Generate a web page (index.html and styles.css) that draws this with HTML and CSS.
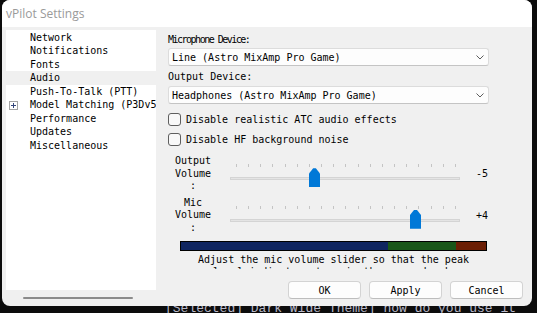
FILE: index.html
```html
<!DOCTYPE html>
<html>
<head>
<meta charset="utf-8">
<title>vPilot Settings</title>
<link rel="stylesheet" href="styles.css">
</head>
<body>
<div class="window">
  <div class="titlebar">vPilot Settings</div>
  <div class="body">
    <div class="side">
      <div class="tree">
        <div class="node"><span class="indent"></span>Network</div>
        <div class="node"><span class="indent"></span>Notifications</div>
        <div class="node"><span class="indent"></span>Fonts</div>
        <div class="node selected"><span class="indent"></span>Audio</div>
        <div class="node"><span class="indent"></span>Push-To-Talk (PTT)</div>
        <div class="node"><span class="indent"><svg class="expander" width="9" height="9" viewBox="0 0 9 9"><rect x="0.5" y="0.5" width="8" height="8" fill="#fff" stroke="#a3a3a3"/><path d="M2 4.5h5M4.5 2v5" stroke="#33457a" stroke-width="1"/></svg></span>Model Matching (P3Dv5)</div>
        <div class="node"><span class="indent"></span>Performance</div>
        <div class="node"><span class="indent"></span>Updates</div>
        <div class="node"><span class="indent"></span>Miscellaneous</div>
      </div>
      <div class="hscroll"><div class="hthumb"></div></div>
    </div>
    <div class="main">
      <div class="content">
        <div class="label first condensed">Microphone Device:</div>
        <div class="combo">
          <span>Line (Astro MixAmp Pro Game)</span>
          <svg width="8" height="5" viewBox="0 0 8 5"><path d="M0.5 0.5L4 4L7.5 0.5" fill="none" stroke="#5d5d5d" stroke-width="1"/></svg>
        </div>
        <div class="label second">Output Device:</div>
        <div class="combo combo2">
          <span>Headphones (Astro MixAmp Pro Game)</span>
          <svg width="8" height="5" viewBox="0 0 8 5"><path d="M0.5 0.5L4 4L7.5 0.5" fill="none" stroke="#5d5d5d" stroke-width="1"/></svg>
        </div>
        <div class="check check1"><span class="box"></span>Disable realistic ATC audio effects</div>
        <div class="check check2"><span class="box"></span>Disable HF background noise</div>
        <div class="vol vol1">
          <div class="vol-label">Output Volume :</div>
          <div class="slider">
            <div class="ticks"><i></i><i></i><i></i><i></i><i></i><i></i><i></i><i></i><i></i><i></i><i></i><i></i><i></i><i></i><i></i><i></i><i></i><i></i><i></i></div>
            <div class="track"></div>
            <div class="thumb" style="left:79px"></div>
          </div>
          <div class="vol-value">-5</div>
        </div>
        <div class="vol vol2">
          <div class="vol-label">Mic Volume :</div>
          <div class="slider">
            <div class="ticks"><i></i><i></i><i></i><i></i><i></i><i></i><i></i><i></i><i></i><i></i><i></i><i></i><i></i><i></i><i></i><i></i><i></i><i></i><i></i></div>
            <div class="track"></div>
            <div class="thumb" style="left:180px"></div>
          </div>
          <div class="vol-value">+4</div>
        </div>
        <div class="meter">
          <span class="seg low"></span><span class="seg mid"></span><span class="seg high"></span>
        </div>
        <div class="help">Adjust the mic volume slider so that the peak level indicator stays in the green band.</div>
      </div>
      <div class="buttons">
        <div class="btn">OK</div>
        <div class="btn">Apply</div>
        <div class="btn">Cancel</div>
      </div>
    </div>
  </div>
</div>
<div class="behind">[Selected] Dark Wide Theme] how do you use it</div>
</body>
</html>
```

FILE: styles.css
```css
html, body {
  margin: 0;
  padding: 0;
}

body {
  width: 537px;
  height: 313px;
  overflow: hidden;
  background: #0c0c0c;
  font-family: "DejaVu Sans Mono", monospace;
  font-size: 10px;
  color: #000;
}

.window {
  position: relative;
  z-index: 1;
  margin-left: 2px;
  width: 530px;
  height: 306px;
  background: #f0f0f0;
  border-radius: 8px;
  overflow: hidden;
  display: flex;
  flex-direction: column;
}

.titlebar {
  flex: none;
  height: 27px;
  background: #fff;
  font-family: "Open Sans", "Noto Sans", sans-serif;
  font-size: 12px;
  color: #9a9a9a;
  padding-left: 4px;
  display: flex;
  align-items: center;
}

.body {
  flex: 1;
  min-height: 0;
  display: flex;
  padding: 3px 9px 7px 4px;
}

.side {
  flex: none;
  width: 150px;
  display: flex;
  flex-direction: column;
}

.tree {
  height: 261px;
  box-sizing: border-box;
  background: #fff;
  padding-top: 0.5px;
  overflow: hidden;
}

.node {
  height: 13.5px;
  line-height: 13.5px;
  display: flex;
  white-space: nowrap;
}

.node.selected {
  background: #f0f0f0;
}

.indent {
  flex: none;
  width: 24px;
  display: flex;
  align-items: center;
}

.expander {
  display: block;
  margin-left: 3px;
  margin-top: 1px;
}

.hscroll {
  margin-top: 7px;
  padding-left: 17px;
}

.hthumb {
  width: 110px;
  height: 2px;
  border-radius: 1px;
  background: #8b8b8b;
}

.main {
  flex: 1;
  display: flex;
  flex-direction: column;
  padding-left: 12px;
}

.content {
  width: 321px;
  display: flex;
  flex-direction: column;
}

.label {
  line-height: 13px;
  white-space: nowrap;
}

.label.first {
  margin-top: 3px;
}

.label.second {
  margin-top: 4px;
}

.condensed {
  letter-spacing: -1.5px;
}

.combo {
  margin-top: 2px;
  height: 18px;
  box-sizing: border-box;
  background: #fdfdfd;
  border: 1px solid #dcdcdc;
  border-bottom-color: #c4c4c4;
  border-radius: 3px;
  display: flex;
  align-items: center;
  justify-content: space-between;
  padding: 0 4px 0 3px;
  white-space: nowrap;
}

.combo2 {
  margin-top: 3px;
}

.check {
  height: 13px;
  display: flex;
  align-items: center;
  gap: 5px;
  white-space: nowrap;
}

.check1 {
  margin-top: 9px;
}

.check2 {
  margin-top: 7px;
}

.box {
  flex: none;
  width: 13px;
  height: 13px;
  box-sizing: border-box;
  border: 1px solid #5e5e5e;
  border-radius: 3px;
  background: #f8f8f8;
}

.vol {
  display: grid;
  grid-template-columns: 50px 230px 1fr;
  column-gap: 12px;
  align-items: center;
}

.vol1 {
  margin-top: 9px;
}

.vol2 {
  margin-top: 4px;
}

.vol-label {
  padding: 0 4px;
  text-align: center;
  line-height: 12.5px;
}

.vol-value {
  padding-left: 4px;
  white-space: nowrap;
}

.slider {
  position: relative;
  height: 27px;
  display: flex;
  flex-direction: column;
}

.ticks {
  margin: 4px 0 0 6px;
  width: 220px;
  height: 3px;
  display: flex;
  justify-content: space-between;
}

.ticks i {
  width: 1px;
  background: #c4c4c4;
}

.track {
  margin-top: 10px;
  height: 1px;
  border: 1px solid #d4d4d4;
  background: #e4e4e4;
}

.thumb {
  position: absolute;
  top: 8px;
  width: 11px;
  height: 19px;
  background: #0078d7;
  clip-path: polygon(38% 0, 62% 0, 100% 27%, 100% 100%, 0 100%, 0 27%);
}

.meter {
  margin: 7px 0 0 12px;
  width: 307px;
  height: 10px;
  box-sizing: border-box;
  border: 1px solid #000;
  display: flex;
}

.seg.low {
  width: 207px;
  background: #0f2560;
}

.seg.mid {
  width: 68px;
  background: #195619;
}

.seg.high {
  flex: 1;
  background: #6b1e04;
}

.help {
  margin: 3px 0 0 12px;
  width: 307px;
  height: 15px;
  overflow: hidden;
  text-align: center;
  line-height: 12px;
}

.buttons {
  margin-top: auto;
  display: flex;
  justify-content: flex-end;
  gap: 8px;
}

.btn {
  width: 73px;
  height: 18px;
  box-sizing: border-box;
  background: #fdfdfd;
  border: 1px solid #d3d3d3;
  border-bottom-color: #bdbdbd;
  border-radius: 4px;
  display: flex;
  align-items: center;
  justify-content: center;
}

.behind {
  margin-top: -4px;
  padding-left: 165px;
  font-family: "Liberation Mono", monospace;
  font-size: 13px;
  line-height: 14px;
  color: #b8b8c8;
  white-space: nowrap;
}
```
